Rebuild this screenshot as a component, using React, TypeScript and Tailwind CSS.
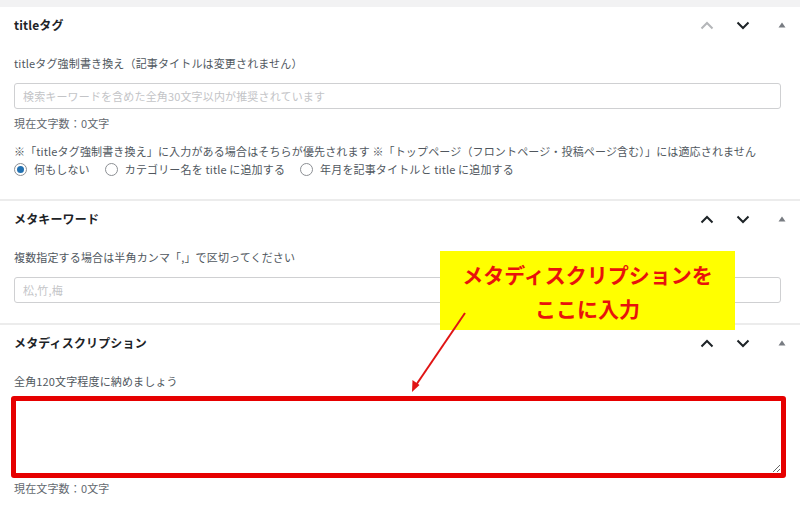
import React from "react";

const FONT = { fontFamily: '"Noto Sans CJK JP", "Noto Sans", sans-serif' };

// WordPress-style metabox handle buttons (move up / move down / toggle)
function Handles({ upDisabled = false }: { upDisabled?: boolean }) {
  return (
    <div className="flex items-center pr-[14px]">
      <svg width="14" height="9" viewBox="0 0 14 9" className={upDisabled ? "text-[#b4b6b9]" : "text-[#1d2327]"}>
        <path d="M1.5 7.5 L7 2 L12.5 7.5" fill="none" stroke="currentColor" strokeWidth="2" />
      </svg>
      <svg width="14" height="9" viewBox="0 0 14 9" className="ml-[22px] text-[#1d2327]">
        <path d="M1.5 1.5 L7 7 L12.5 1.5" fill="none" stroke="currentColor" strokeWidth="2" />
      </svg>
      <svg width="8" height="6" viewBox="0 0 8 6" className="ml-[28px] text-[#787c82]">
        <path d="M4 0.5 L7.5 5.5 L0.5 5.5 Z" fill="currentColor" />
      </svg>
    </div>
  );
}

function Header({ title, upDisabled }: { title: string; upDisabled?: boolean }) {
  return (
    <div className="flex h-9 items-center justify-between pl-[14px]">
      <h2 className="text-[12px] font-bold text-[#1d2327]">{title}</h2>
      <Handles upDisabled={upDisabled} />
    </div>
  );
}

function Radio({ checked, label }: { checked?: boolean; label: string }) {
  return (
    <label className="flex items-center gap-[7px]">
      <span className="flex h-[13px] w-[13px] items-center justify-center rounded-full border border-[#8c8f94] bg-white">
        {checked && <span className="h-[7px] w-[7px] rounded-full bg-[#2271b1]" />}
      </span>
      <span>{label}</span>
    </label>
  );
}

export default function App() {
  return (
    <div
      className="relative h-[511px] w-[800px] overflow-hidden bg-white text-[11px] tracking-[0.15px] text-[#50575e]"
      style={FONT}
    >
      <div className="h-[7px] bg-[#f2f2f3]" />

      {/* titleタグ */}
      <section className="border-b-2 border-[#ececec]">
        <Header title="titleタグ" upDisabled />
        <div className="flex flex-col pb-[22px] pl-[14px] pr-[19px] pt-[12px]">
          <p className="leading-4">titleタグ強制書き換え（記事タイトルは変更されません）</p>
          <input
            className="mt-[12px] h-[26px] w-full rounded-[3px] border border-[#cfd0d2] px-[8px] text-[11px] outline-none placeholder:text-[#c3c4c7]"
            placeholder="検索キーワードを含めた全角30文字以内が推奨されています"
          />
          <p className="mt-[6px] leading-4 text-[#646970]">現在文字数：0文字</p>
          <p className="mt-[12px] leading-4">
            ※「titleタグ強制書き換え」に入力がある場合はそちらが優先されます ※「トップページ（フロントページ・投稿ページ含む）」には適応されません
          </p>
          <div className="mt-[2px] flex items-center gap-[15px] leading-4">
            <Radio checked label="何もしない" />
            <Radio label="カテゴリー名を title に追加する" />
            <Radio label="年月を記事タイトルと title に追加する" />
          </div>
        </div>
      </section>

      {/* メタキーワード */}
      <section className="border-b-2 border-[#ececec]">
        <Header title="メタキーワード" />
        <div className="flex flex-col pb-[20px] pl-[14px] pr-[19px] pt-[12px]">
          <p className="leading-4">複数指定する場合は半角カンマ「,」で区切ってください</p>
          <input
            className="mt-[12px] h-[26px] w-full rounded-[3px] border border-[#cfd0d2] px-[8px] text-[11px] outline-none placeholder:text-[#c3c4c7]"
            placeholder="松,竹,梅"
          />
        </div>
      </section>

      {/* メタディスクリプション */}
      <section>
        <Header title="メタディスクリプション" />
        <div className="flex flex-col pl-[14px] pr-[19px] pt-[12px]">
          <p className="leading-4">全角120文字程度に納めましょう</p>
          <textarea className="-ml-[3px] mt-[7px] h-[82px] w-[775px] resize-y rounded-[3px] border-[5px] border-[#e60000] outline-none" />
          <p className="mt-[2px] leading-4 text-[#646970]">現在文字数：0文字</p>
        </div>
      </section>

      {/* annotation callout */}
      <div className="absolute left-[440px] top-[251px] flex h-[79px] w-[295px] flex-col items-center justify-center bg-[#ffff00] text-[21px] font-bold leading-[34px] tracking-normal text-[#e8120c]">
        <span>メタディスクリプションを</span>
        <span>ここに入力</span>
      </div>
      <svg className="absolute left-0 top-0" width="800" height="511" viewBox="0 0 800 511">
        <line x1="465" y1="313" x2="414" y2="388" stroke="#e01414" strokeWidth="2" />
        <path d="M412 392 L412.5 380 L419.5 385 Z" fill="#e01414" />
      </svg>
    </div>
  );
}
